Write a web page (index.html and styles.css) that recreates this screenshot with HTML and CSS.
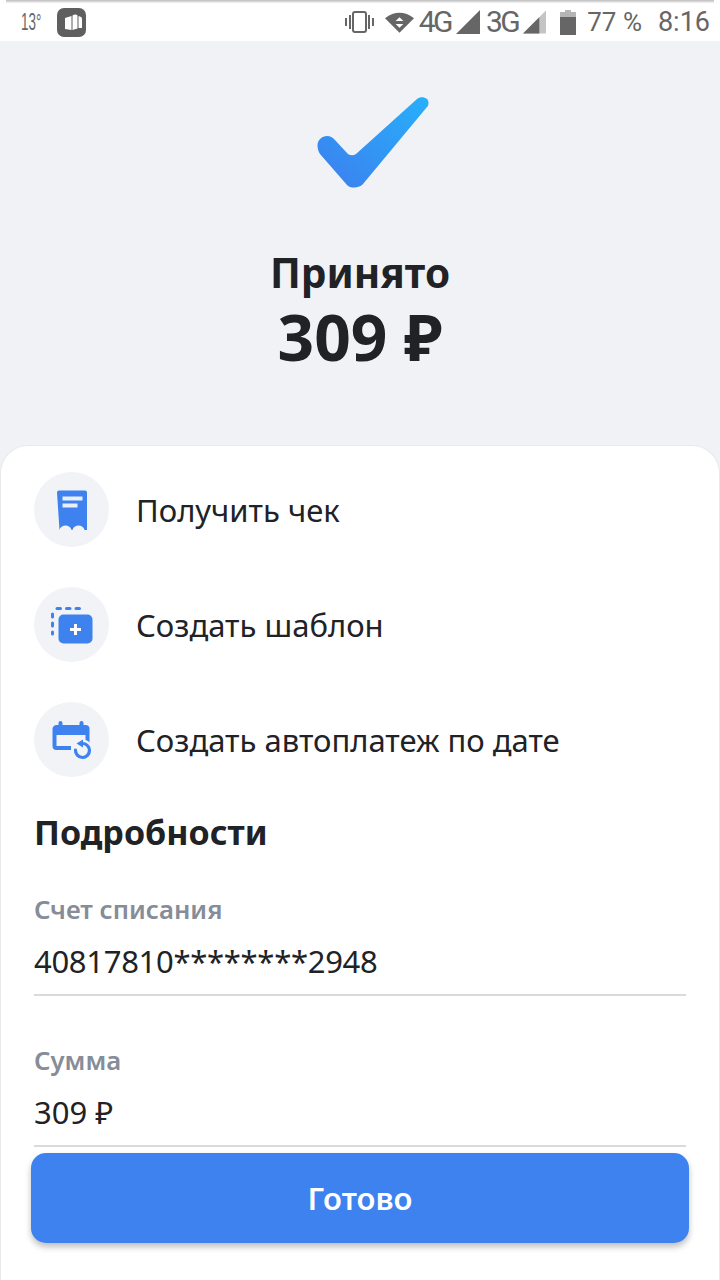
FILE: index.html
```html
<!DOCTYPE html>
<html lang="ru">
<head>
<meta charset="utf-8">
<title>Принято</title>
<link rel="stylesheet" href="styles.css">
</head>
<body>
<div class="page">
  <header class="status">
    <div class="status-left">
      <span class="temp">13°</span>
      <svg class="app-icon" width="29" height="29" viewBox="0 0 29 29"><rect width="29" height="29" rx="7" fill="#5f5f5f"/><path d="M8 10l6.500-2v14l-6.500-1zM15.500 7.500c2-1.500 4-1.500 5 0v13l-5 1.500zM21.500 8c2 .5 3.500 1 3.500 3v9h-3.500z" fill="#fff"/></svg>
    </div>
    <div class="status-right">
      <svg class="st-vib" width="31" height="24" viewBox="0 0 31 24"><rect x="9" y="2" width="13" height="20" rx="2" fill="none" stroke="#666" stroke-width="2"/><path d="M1 8h2v8H1zM5 5h2v14H5zM24 5h2v14h-2zM28 8h2v8h-2z" fill="#666"/></svg>
      <svg class="st-wifi" width="29" height="22" viewBox="0 0 30 22"><path d="M0 7Q15-4 30 7L15 22z" fill="#666"/><path d="M15 6l4 4h-8zM15 17l-4-4h8z" fill="#fff"/></svg>
      <span class="st-text st-net">4G</span>
      <svg class="st-tri" width="24" height="24" viewBox="0 0 24 24"><path d="M0 24L24 0v24z" fill="#666"/></svg>
      <span class="st-text st-net">3G</span>
      <svg class="st-tri2" width="23" height="24" viewBox="0 0 24 24"><path d="M0 24L24 0v24z" fill="#c4c4c4"/><path d="M0 24L17 7v17z" fill="#666"/></svg>
      <svg class="st-batt" width="16" height="25" viewBox="0 0 16 25"><path d="M5 0h6v2h5v5H0V2h5z" fill="#b5b5b5"/><path d="M0 7h16v18H0z" fill="#666"/></svg>
      <span class="st-text st-pct">77 %</span>
      <span class="st-text st-time">8:16</span>
    </div>
  </header>

  <section class="hero">
    <svg class="check" width="112" height="92" viewBox="0 0 112 92">
      <defs><linearGradient id="chk" x1="0" y1="1" x2="1" y2="0"><stop offset="0" stop-color="#3d7eee"/><stop offset="1" stop-color="#27b0fb"/></linearGradient></defs>
      <path d="M0.500 48C0.500 43 5 39 10 39C13 39 15 40 17 42L30 56C32 58.500 36 59 39 57L100 2C103 -0.500 107 -0.500 110 2C112 4 112 8 110 10L46 87C43 91 34 92 30 88L3 57C1 54 0.500 51 0.500 48Z" fill="url(#chk)"/>
    </svg>
    <h1 class="title">Принято</h1>
    <p class="amount">309 ₽</p>
  </section>

  <main class="card">
    <ul class="actions">
      <li class="action">
        <span class="circle">
          <svg width="32" height="40" viewBox="0 0 32 40"><path d="M1 2.500a2 2 0 0 1 2-2h26a2 2 0 0 1 2 2V40h-2.500c-1-6-11-6-12 0h-1c-1-6-11-6-12 0z" fill="#3d82ef"/><path d="M6.500 6.500h20v4h-20zM6.500 13.500h15v4h-15z" fill="#eaf0fb"/></svg>
        </span>
        <span class="action-text">Получить чек</span>
      </li>
      <li class="action">
        <span class="circle">
          <svg width="44" height="38" viewBox="0 0 44 38"><rect x="8.500" y="8.500" width="34" height="29" rx="5" fill="#3d82ef"/><path d="M24 18h3v4h4v3h-4v4h-3v-4h-4v-3h4z" fill="#fff"/><path d="M7 2.500h3.500M16.500 2.500h3.500M26 2.500h3.500M2.500 8v3M2.500 17v3M2.500 26v2" stroke="#3d82ef" stroke-width="3" stroke-linecap="round" fill="none"/></svg>
        </span>
        <span class="action-text">Создать шаблон</span>
      </li>
      <li class="action">
        <span class="circle">
          <svg width="42" height="40" viewBox="0 0 42 40"><path d="M9.500 3v4M30.500 3v4" stroke="#3d82ef" stroke-width="4" stroke-linecap="round"/><path d="M3.500 9a2 2 0 0 1 2-2h29a2 2 0 0 1 2 2v15M20 28H5.500a2 2 0 0 1-2-2V9" fill="none" stroke="#3d82ef" stroke-width="4"/><path d="M3 7h34v8H3z" fill="#3d82ef"/><circle cx="31.500" cy="30" r="10.500" fill="#f1f3f6"/><path d="M31 23.500a7 7 0 1 1-6.500 6.500" fill="none" stroke="#3d82ef" stroke-width="3.200" stroke-linecap="round"/><path d="M32 19.500v8l-6.500-4z" fill="#3d82ef"/></svg>
        </span>
        <span class="action-text">Создать автоплатеж по дате</span>
      </li>
    </ul>

    <h2 class="details-title">Подробности</h2>

    <div class="field field-first">
      <div class="field-label">Счет списания</div>
      <div class="field-value field-masked">40817810********2948</div>
    </div>
    <div class="field field-second">
      <div class="field-label">Сумма</div>
      <div class="field-value">309 ₽</div>
    </div>

    <div class="footer">
      <button class="done" type="button">Готово</button>
    </div>
  </main>
</div>
</body>
</html>
```

FILE: styles.css
```css
* { box-sizing: border-box; }
html, body { margin: 0; padding: 0; }
body {
  width: 720px;
  height: 1280px;
  overflow: hidden;
  font-family: "Noto Sans", "Open Sans", sans-serif;
  color: #212226;
  background: #f0f2f6;
}
.page {
  display: flex;
  flex-direction: column;
  height: 1280px;
}
.status {
  height: 41px;
  flex: none;
  background: #fff;
  display: flex;
  justify-content: space-between;
  align-items: center;
  padding: 3px 10px 0 21px;
  position: relative;
  color: #666;
}
.status::before {
  content: "";
  position: absolute;
  left: 6px;
  right: 6px;
  top: 0;
  height: 3px;
  background: linear-gradient(#bdbdbd, #f5f5f5);
}
.status-left { display: flex; align-items: center; }
.temp {
  font-family: "Liberation Sans", sans-serif;
  font-size: 24px;
  line-height: 28px;
  width: 36px;
  white-space: nowrap;
  transform: scaleX(0.56);
  transform-origin: left center;
}
.status-right { display: flex; align-items: center; }
.st-vib { margin-right: 10px; }
.st-wifi { margin-right: 5px; }
.st-text {
  font-family: "Roboto", sans-serif;
  font-size: 27px;
  line-height: 32px;
  white-space: nowrap;
}
.st-net { font-size: 30px; letter-spacing: -2.500px; }
.st-tri { margin: 0 6px 0 5px; }
.st-tri2 { margin-left: 5px; }
.st-batt { margin: 0 11px 0 14px; }
.st-pct { font-size: 26px; margin-right: 16px; }

.hero {
  height: 404px;
  flex: none;
  display: flex;
  flex-direction: column;
  align-items: center;
  padding-top: 56px;
}
.check { display: block; margin-left: 26px; }
.title {
  margin: 59px 0 0;
  font-size: 40.500px;
  line-height: 50px;
  font-weight: 700;
}
.amount {
  margin: 4px 0 0;
  font-size: 64px;
  line-height: 70px;
  font-weight: 700;
}

.card {
  flex: 1;
  position: relative;
  background: #fff;
  border: 1px solid #e8e9ec;
  border-bottom: 0;
  border-radius: 28px 28px 0 0;
  padding: 26px 33px 0;
  overflow: hidden;
}
.actions {
  list-style: none;
  margin: 0;
  padding: 0;
  display: flex;
  flex-direction: column;
  gap: 40px;
}
.action {
  display: flex;
  align-items: center;
  gap: 27px;
  height: 75px;
}
.circle {
  width: 75px;
  height: 75px;
  border-radius: 50%;
  background: #f1f3f6;
  display: flex;
  align-items: center;
  justify-content: center;
  flex: none;
}
.action-text { font-size: 31px; line-height: 38px; }
.details-title {
  margin: 32px 0 0;
  font-size: 34px;
  line-height: 46px;
  font-weight: 700;
}
.field {
  border-bottom: 2px solid #d9dadc;
}
.field-first { height: 141px; padding-top: 38px; }
.field-second { height: 151px; padding-top: 48px; }
.field-label {
  font-size: 25.700px;
  line-height: 34px;
  font-weight: 600;
  color: #868c98;
}
.field-value {
  margin-top: 14px;
  font-size: 31px;
  line-height: 40px;
}
.field-masked { letter-spacing: -0.300px; }
.footer {
  position: absolute;
  left: 0;
  right: 0;
  bottom: 0;
  height: 131px;
  padding: 4px 30px 0;
  background: #fff;
}
.done {
  display: block;
  width: 100%;
  height: 90px;
  border: 0;
  border-radius: 15px;
  background: #3d82ef;
  box-shadow: 0 4px 6px rgba(0,0,0,0.25);
  color: #fff;
  font-family: inherit;
  font-size: 31px;
  font-weight: 600;
}
```
